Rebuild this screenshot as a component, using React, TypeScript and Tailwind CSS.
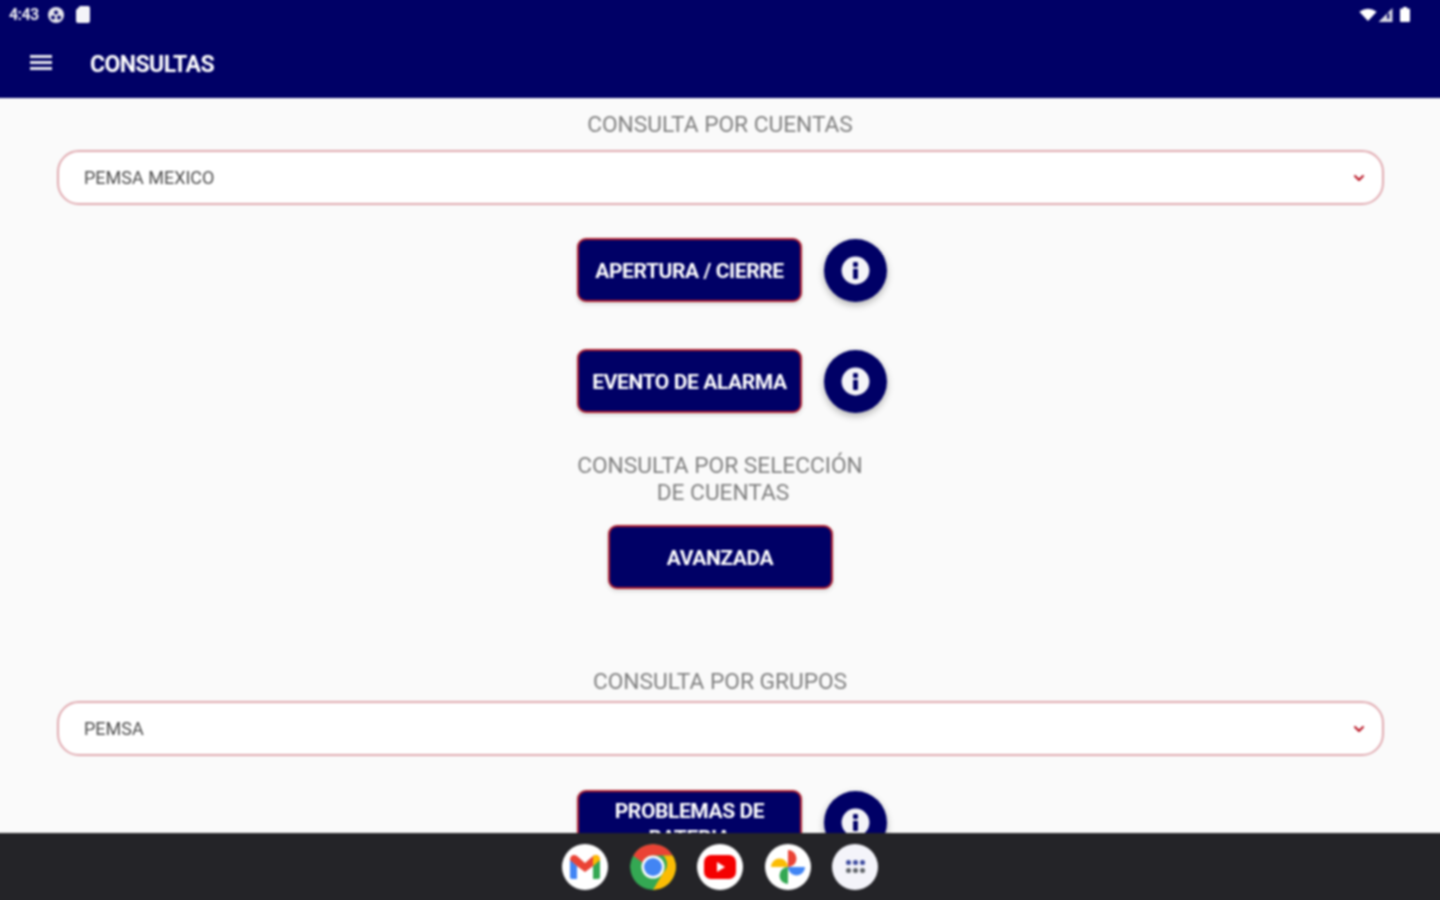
import React from 'react';
import { ChevronDown } from 'lucide-react';

const InfoButton: React.FC = () => (
  <div className="w-[63px] h-[63px] shrink-0 rounded-full bg-[#000066] flex items-center justify-center shadow-[0_3px_7px_rgba(0,0,0,0.3)]">
    <svg width="29" height="29" viewBox="0 0 24 24" aria-hidden="true">
      <circle cx="12" cy="12" r="11.5" fill="#f4f4f8" />
      <rect x="10" y="5" width="4" height="4" rx="1" fill="#000066" />
      <rect x="10" y="10.5" width="4" height="8.5" rx="0.6" fill="#000066" />
    </svg>
  </div>
);

const ActionButton: React.FC<{ label: React.ReactNode; className?: string }> = ({ label, className = '' }) => (
  <div className={`w-[225px] h-[64px] pt-[2px] shrink-0 rounded-[9px] bg-[#000066] border-2 border-[#b3202f] flex items-center justify-center text-white text-[21px] font-bold tracking-[-0.4px] text-center leading-[27px] shadow-[0_2px_4px_rgba(0,0,0,0.15)] ${className}`}>
    {label}
  </div>
);

const ActionRow: React.FC<{ label: React.ReactNode; className?: string }> = ({ label, className = '' }) => (
  <div className={`shrink-0 flex items-center justify-center gap-[22px] pl-[24px] ${className}`}>
    <ActionButton label={label} />
    <InfoButton />
  </div>
);

const SelectBox: React.FC<{ value: string; className?: string }> = ({ value, className = '' }) => (
  <div className={`shrink-0 ml-[57px] mr-[56px] h-[55px] rounded-[22px] bg-white border-2 border-[#e0aab0] flex items-center justify-between pl-[25px] pr-[15px] text-[#4d4d4d] text-[18px] ${className}`}>
    <span>{value}</span>
    <ChevronDown size={16} strokeWidth={3} className="text-[#b8101f]" />
  </div>
);

const SectionTitle: React.FC<{ children: React.ReactNode; className?: string }> = ({ children, className = '' }) => (
  <div className={`shrink-0 text-center text-[22.7px] leading-[27px] text-[#808080] ${className}`}>{children}</div>
);

const Gmail = () => (
  <svg width="34" height="28" viewBox="0 0 34 28" aria-hidden="true">
    <path d="M2 6v18a2 2 0 0 0 2 2h5V13z" fill="#4285f4" />
    <path d="M32 6v18a2 2 0 0 1-2 2h-5V13z" fill="#34a853" />
    <path d="M2 7c0-5 4-6 7-4l8 7 8-7c3-2 7-1 7 4l-7 6-8 6-8-6z" fill="#ea4335" />
    <path d="M25 3c3-2 7-1 7 4l-7 6z" fill="#fbbc04" />
  </svg>
);

const Chrome = () => (
  <svg width="46" height="46" viewBox="0 0 46 46" aria-hidden="true">
    <circle cx="23" cy="23" r="23" fill="#34a853" />
    <path d="M23 0a23 23 0 0 1 20 11.5H23a11.5 11.5 0 0 0-10.5 7L3 11.5A23 23 0 0 1 23 0z" fill="#ea4335" />
    <path d="M43 11.5A23 23 0 0 1 23 46l10-17a11.5 11.5 0 0 0 0-17.500z" fill="#fbbc04" />
    <circle cx="23" cy="23" r="11.500" fill="#fff" />
    <circle cx="23" cy="23" r="9" fill="#4285f4" />
  </svg>
);

const Youtube = () => (
  <svg width="32" height="24" viewBox="0 0 32 24" aria-hidden="true">
    <rect width="32" height="24" rx="7" fill="#f40000" />
    <path d="M13 7l8 5-8 5z" fill="#fff" />
  </svg>
);

const Photos = () => (
  <svg width="36" height="36" viewBox="0 0 36 36" aria-hidden="true">
    <path d="M18 18V1a8.500 8.500 0 0 1 0 17z" fill="#ea4335" />
    <path d="M18 18h17a8.500 8.500 0 0 1-17 0z" fill="#4285f4" />
    <path d="M18 18v17a8.500 8.500 0 0 1 0-17z" fill="#34a853" />
    <path d="M18 18H1a8.500 8.500 0 0 1 17 0z" fill="#fbbc04" />
  </svg>
);

const Launcher = () => (
  <div className="grid grid-cols-3 gap-x-[2px] gap-y-[3px]">
    {['#3c4a9e', '#3c4a9e', '#3c4a9e', '#5f6368', '#5f6368', '#5f6368'].map((c, i) => (
      <div key={i} className="w-[5px] h-[5px] rounded-full" style={{ backgroundColor: c }} />
    ))}
  </div>
);

const DockIcon: React.FC<{ children: React.ReactNode; plain?: boolean; bg?: string }> = ({ children, plain, bg = 'bg-white' }) => (
  <div className={`w-[46px] h-[46px] rounded-full flex items-center justify-center overflow-hidden ${plain ? '' : bg}`}>
    {children}
  </div>
);

const App: React.FC = () => {
  return (
    <div className="w-[1440px] h-[900px] overflow-hidden">
      {/* 4px bleed on every side so the soft edge falls outside the window */}
      <div className="w-[1448px] h-[908px] -m-[4px] flex flex-col overflow-hidden bg-[#fafafa] blur-[0.8px] font-['Roboto',sans-serif]">
        <header className="h-[102px] shrink-0 pt-[4px] px-[4px] bg-[#000066] text-white flex flex-col">
          <div className="h-[29px] shrink-0 flex items-center justify-between pl-[9px] pr-[29px]">
            <div className="flex items-center gap-[8px]">
              <span className="text-[16px] font-bold tracking-[-0.6px] text-[#e8e8f0]">4:43</span>
              <svg width="18" height="18" viewBox="0 0 18 18" aria-hidden="true">
                <circle cx="9" cy="9" r="8" fill="#e4e4ec" />
                <circle cx="9" cy="6.500" r="2" fill="#000066" />
                <circle cx="6" cy="11.500" r="2" fill="#000066" />
                <circle cx="12" cy="11.500" r="2" fill="#000066" />
              </svg>
              <svg width="15" height="17" viewBox="0 0 15 17" className="ml-[2px]" aria-hidden="true">
                <path d="M5 0h8a2 2 0 0 1 2 2v13a2 2 0 0 1-2 2H3a2 2 0 0 1-2-2V4z" fill="#f4f4f8" />
              </svg>
            </div>
            <div className="flex items-center gap-[1px] -translate-x-[1px]">
              <svg width="18" height="13" viewBox="0 0 16 12" aria-hidden="true">
                <path d="M0 3.500Q8-2 16 3.500L8 12z" fill="#fff" />
              </svg>
              <svg width="15" height="14" viewBox="0 0 13 13" aria-hidden="true">
                <path d="M13 0v13H0z" fill="#d8d8e4" />
                <rect x="8" y="5" width="2" height="5" fill="#000066" />
              </svg>
              <svg width="10" height="15" viewBox="0 0 10 15" className="ml-[6px]" aria-hidden="true">
                <path d="M3 0h4v1.500h2a1 1 0 0 1 1 1V14a1 1 0 0 1-1 1H1a1 1 0 0 1-1-1V2.500a1 1 0 0 1 1-1h2z" fill="#fff" />
              </svg>
            </div>
          </div>
          <div className="flex-1 flex items-center pl-[30px] pt-[4px]">
            <svg width="22" height="18" viewBox="0 0 22 18" className="-mt-[6px]" aria-hidden="true">
              <rect y="1" width="22" height="3" fill="#e8e8f0" />
              <rect y="7" width="22" height="3" fill="#e8e8f0" />
              <rect y="13" width="22" height="3" fill="#e8e8f0" />
            </svg>
            <span className="ml-[38px] text-[23px] font-bold tracking-[-0.55px]">CONSULTAS</span>
          </div>
        </header>

        <main className="flex-1 min-h-0 px-[4px] overflow-hidden flex flex-col">
          <SectionTitle className="mt-[13px]">CONSULTA POR CUENTAS</SectionTitle>
          <SelectBox value="PEMSA MEXICO" className="mt-[12px]" />
          <ActionRow label="APERTURA / CIERRE" className="mt-[33px]" />
          <ActionRow label="EVENTO DE ALARMA" className="mt-[47px]" />
          <SectionTitle className="mt-[39px]">
            CONSULTA POR SELECCIÓN
            <br />
            <span className="pl-[6px]">DE CUENTAS</span>
          </SectionTitle>
          <div className="shrink-0 flex justify-center mt-[19px]">
            <ActionButton label="AVANZADA" />
          </div>
          <SectionTitle className="mt-[79px]">CONSULTA POR GRUPOS</SectionTitle>
          <SelectBox value="PEMSA" className="mt-[6px]" />
          <ActionRow
            label={
              <span className="block pt-[3px]">
                PROBLEMAS DE
                <br />
                BATERIA
              </span>
            }
            className="mt-[34px]"
          />
        </main>

        <footer className="h-[71px] shrink-0 pb-[4px] px-[4px] bg-[#242428] flex items-center justify-center gap-[21.500px]">
          <DockIcon><Gmail /></DockIcon>
          <DockIcon plain><Chrome /></DockIcon>
          <DockIcon><Youtube /></DockIcon>
          <DockIcon><Photos /></DockIcon>
          <DockIcon bg="bg-[#f4f4fa]"><Launcher /></DockIcon>
        </footer>
      </div>
    </div>
  );
};

export default App;
